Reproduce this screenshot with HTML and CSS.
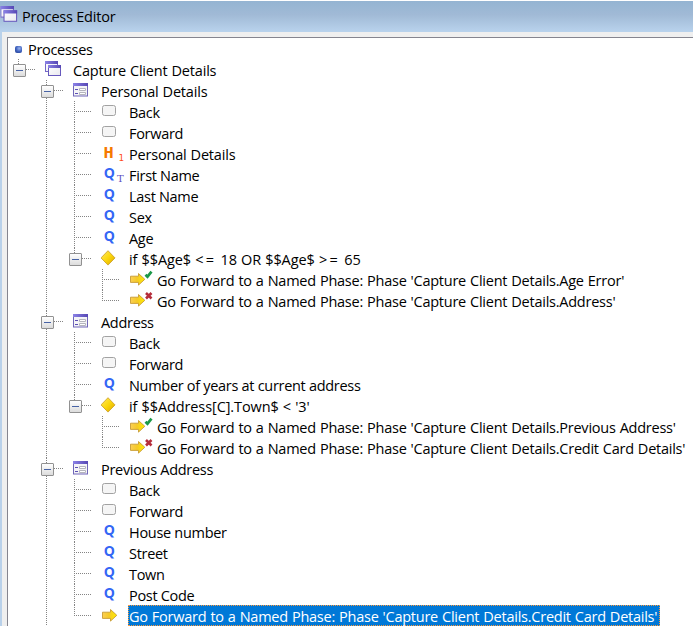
FILE: index.html
```html
<!DOCTYPE html>
<html lang="en">
<head>
<meta charset="utf-8">
<title>Process Editor</title>
<link rel="stylesheet" href="styles.css">
</head>
<body>
<svg class="defs" aria-hidden="true">
  <defs>
    <linearGradient id="bar" x1="0" x2="1"><stop offset="0" stop-color="#8b82e6"/><stop offset="1" stop-color="#5647b4"/></linearGradient>
    <linearGradient id="paper" x1="0" y1="0" x2="1" y2="1"><stop offset="0" stop-color="#fff"/><stop offset="1" stop-color="#e9e9ef"/></linearGradient>
    <linearGradient id="gold" x1="0" y1="0" x2="1" y2="1"><stop offset="0" stop-color="#ffe96a"/><stop offset=".5" stop-color="#fbd70c"/><stop offset="1" stop-color="#dba600"/></linearGradient>
    <linearGradient id="arrowfill" x1="0" x2="1"><stop offset="0" stop-color="#fbcf55"/><stop offset=".45" stop-color="#f5c927"/><stop offset="1" stop-color="#ffee00"/></linearGradient>
    <symbol id="process" viewBox="0 0 27 21">
      <rect x=".5" y="2.5" width="12" height="10" fill="url(#paper)" stroke="#7468c8"/><path d="M0 2h13v3H0z" fill="url(#bar)"/>
      <rect x="3.5" y="6.5" width="12" height="10" fill="url(#paper)" stroke="#6759bd"/><path d="M3 6h13v3H3z" fill="url(#bar)"/>
    </symbol>
    <symbol id="phase" viewBox="0 0 27 21">
      <rect x=".5" y="3.5" width="14" height="12.5" fill="#f4f4f7" stroke="#7066b8"/><path d="M0 3h15v3H0z" fill="url(#bar)"/>
      <path d="M2 9.5h3M2 13.5h3" stroke="#5c50b4"/><path d="M6.5 8.5h6v2h-6zM6.5 12.5h6v2h-6z" fill="#fff" stroke="#b5b5bd"/>
    </symbol>
    <symbol id="button" viewBox="0 0 27 21">
      <rect x="1.5" y="4.5" width="13" height="10" rx="2" fill="#f5f5f5" stroke="#a2a2a2"/>
    </symbol>
    <symbol id="decision" viewBox="0 0 27 21"><path d="M7 2.7l7 7.2-7 7.2-7-7.200z" fill="url(#gold)" stroke="#c99b20" stroke-width=".8"/></symbol>
    <symbol id="arrow" viewBox="0 0 27 21"><path d="M1.500 7.200h8V4.500l6.300 5.800-6.300 5.800v-2.700h-8z" fill="url(#arrowfill)" stroke="#c79b34" stroke-width=".9"/></symbol>
    <symbol id="yes" viewBox="0 0 27 21"><use href="#arrow"/><path d="M16.500 5.700l2 2 4-5" fill="none" stroke="#1b9848" stroke-width="2.700"/></symbol>
    <symbol id="no" viewBox="0 0 27 21"><use href="#arrow"/><path d="M17 3l5.500 5.500M22.500 3L17 8.500" fill="none" stroke="#b52d3b" stroke-width="2.600"/></symbol>
    <symbol id="question" viewBox="0 0 27 21"><text class="glyph-q" x="2.700" y="14">Q</text></symbol>
    <symbol id="textq" viewBox="0 0 27 21"><use href="#question"/><text class="glyph-t" x="16" y="18">T</text></symbol>
    <symbol id="heading" viewBox="0 0 27 21"><text class="glyph-h" x="2.400" y="15">H</text><text class="glyph-one" x="17.500" y="18">1</text></symbol>
  </defs>
</svg>
<div class="window">
  <header class="titlebar">
    <svg class="title-icon" viewBox="0 0 27 21"><use href="#process"/></svg>
    <h1>Process Editor</h1>
  </header>
  <main class="pane">
    <div class="root"><i class="bullet"></i><span class="label">Processes</span></div>
    <ul class="tree">
      <li class="last"><div class="row"><i class="branch open"></i><svg class="icon"><use href="#process"/></svg><span class="label title">Capture Client Details</span></div>
        <ul>
          <li><div class="row"><i class="branch open"></i><svg class="icon"><use href="#phase"/></svg><span class="label title">Personal Details</span></div>
            <ul>
              <li><div class="row"><i class="branch"></i><svg class="icon"><use href="#button"/></svg><span class="label">Back</span></div></li>
              <li><div class="row"><i class="branch"></i><svg class="icon"><use href="#button"/></svg><span class="label">Forward</span></div></li>
              <li><div class="row"><i class="branch"></i><svg class="icon"><use href="#heading"/></svg><span class="label title">Personal Details</span></div></li>
              <li><div class="row"><i class="branch"></i><svg class="icon"><use href="#textq"/></svg><span class="label">First Name</span></div></li>
              <li><div class="row"><i class="branch"></i><svg class="icon"><use href="#question"/></svg><span class="label">Last Name</span></div></li>
              <li><div class="row"><i class="branch"></i><svg class="icon"><use href="#question"/></svg><span class="label">Sex</span></div></li>
              <li><div class="row"><i class="branch"></i><svg class="icon"><use href="#question"/></svg><span class="label">Age</span></div></li>
              <li class="last"><div class="row"><i class="branch open"></i><svg class="icon"><use href="#decision"/></svg><span class="label condition">if $$Age$ <span class="op">&lt;=</span> 18 OR $$Age$ <span class="op">&gt;=</span> 65</span></div>
                <ul>
                  <li><div class="row"><i class="branch"></i><svg class="icon"><use href="#yes"/></svg><span class="label action">Go Forward to a Named Phase: Phase 'Capture Client Details.Age Error'</span></div></li>
                  <li class="last"><div class="row"><i class="branch"></i><svg class="icon"><use href="#no"/></svg><span class="label action">Go Forward to a Named Phase: Phase 'Capture Client Details.Address'</span></div></li>
                </ul>
              </li>
            </ul>
          </li>
          <li><div class="row"><i class="branch open"></i><svg class="icon"><use href="#phase"/></svg><span class="label">Address</span></div>
            <ul>
              <li><div class="row"><i class="branch"></i><svg class="icon"><use href="#button"/></svg><span class="label">Back</span></div></li>
              <li><div class="row"><i class="branch"></i><svg class="icon"><use href="#button"/></svg><span class="label">Forward</span></div></li>
              <li><div class="row"><i class="branch"></i><svg class="icon"><use href="#question"/></svg><span class="label">Number of years at current address</span></div></li>
              <li class="last"><div class="row"><i class="branch open"></i><svg class="icon"><use href="#decision"/></svg><span class="label condition">if $$Address[C].Town$ &lt; '3'</span></div>
                <ul>
                  <li><div class="row"><i class="branch"></i><svg class="icon"><use href="#yes"/></svg><span class="label action">Go Forward to a Named Phase: Phase 'Capture Client Details.Previous Address'</span></div></li>
                  <li class="last"><div class="row"><i class="branch"></i><svg class="icon"><use href="#no"/></svg><span class="label action">Go Forward to a Named Phase: Phase 'Capture Client Details.Credit Card Details'</span></div></li>
                </ul>
              </li>
            </ul>
          </li>
          <li><div class="row"><i class="branch open"></i><svg class="icon"><use href="#phase"/></svg><span class="label">Previous Address</span></div>
            <ul>
              <li><div class="row"><i class="branch"></i><svg class="icon"><use href="#button"/></svg><span class="label">Back</span></div></li>
              <li><div class="row"><i class="branch"></i><svg class="icon"><use href="#button"/></svg><span class="label">Forward</span></div></li>
              <li><div class="row"><i class="branch"></i><svg class="icon"><use href="#question"/></svg><span class="label">House number</span></div></li>
              <li><div class="row"><i class="branch"></i><svg class="icon"><use href="#question"/></svg><span class="label">Street</span></div></li>
              <li><div class="row"><i class="branch"></i><svg class="icon"><use href="#question"/></svg><span class="label">Town</span></div></li>
              <li><div class="row"><i class="branch"></i><svg class="icon"><use href="#question"/></svg><span class="label">Post Code</span></div></li>
              <li class="last"><div class="row"><i class="branch"></i><svg class="icon"><use href="#arrow"/></svg><span class="label action selected">Go Forward to a Named Phase: Phase 'Capture Client Details.Credit Card Details'</span></div></li>
            </ul>
          </li>
        </ul>
      </li>
    </ul>
  </main>
</div>
</body>
</html>
```
FILE: styles.css
```css
* { box-sizing: border-box; }
body {
  margin: 0;
  height: 626px;
  overflow: hidden;
  background: #fff;
  color: #000;
  font: 14.5px/19px "Open Sans", "Noto Sans", sans-serif;
  letter-spacing: -0.3px;
}
.defs { position: absolute; width: 0; height: 0; }
.window {
  height: 626px;
  padding-top: 1px;
  display: flex;
  flex-direction: column;
}
.titlebar {
  flex: none;
  height: 31px;
  display: flex;
  align-items: center;
  background: linear-gradient(#94b4d2, #a1bad6 45%, #b9d3ed);
}
.title-icon { width: 29px; height: 22px; margin: -3px -7px 0 0; }
h1 { margin: 0; font: inherit; letter-spacing: -0.22px; }
.pane {
  flex: 1;
  min-height: 0;
  border-left: 2px solid #b9d1ea;
  background: #fff;
  box-shadow: inset 5px 5px #efefef, inset 6px 6px #85858f;
  padding: 6px 0 0 7px;
}
.root { display: flex; height: 21px; align-items: center; }
.root .label { letter-spacing: -0.3px; }
.bullet {
  width: 7px;
  height: 7px;
  margin: 1px 5px 0 6px;
  border-radius: 2px;
  background: radial-gradient(circle at 60% 35%, #9bb5ef, #3f62be 50%, #263f91);
}
ul { list-style: none; margin: 0; padding: 0; }
ul ul { padding-left: 28px; }
li { position: relative; }
li::before {
  content: "";
  position: absolute;
  left: 9px;
  top: 0;
  bottom: 0;
  width: 1px;
  background: repeating-linear-gradient(#848484 0 1px, transparent 1px 2px);
}
.last::before { bottom: auto; height: 11px; }
.row { display: flex; height: 21px; position: relative; }
.branch {
  flex: none;
  width: 17px;
  height: 1px;
  margin: 10px 10px 0 9px;
  background: repeating-linear-gradient(90deg, #848484 0 1px, transparent 1px 2px);
}
.branch.open::before {
  content: "";
  display: block;
  width: 11px;
  height: 11px;
  margin: -5px 0 0 -5px;
  border: 1px solid #919191;
  border-radius: 1px;
  background:
    linear-gradient(#4863a5, #4863a5) center / 7px 1px no-repeat,
    linear-gradient(#fff, #dcdcdc);
}
.icon { flex: none; width: 27px; height: 21px; }
.label {
  height: 21px;
  border: 1px solid transparent;
  white-space: nowrap;
  line-height: 21px;
}
.title { letter-spacing: -0.19px; word-spacing: 0.5px; }
.action { letter-spacing: -0.24px; word-spacing: 0.5px; }
.condition { letter-spacing: -0.1px; word-spacing: 0.5px; }
.op { letter-spacing: 2.3px; }
.selected {
  background: #0078d7;
  color: #fff;
  border: 1px dotted #ff9a3c;
  padding-right: 2px;
}
.glyph-q, .glyph-h { font: bold 14px "Open Sans", sans-serif; letter-spacing: 0; }
.glyph-q { fill: #3366f5; }
.glyph-h { font-family: "Liberation Mono", monospace; font-size: 17px; fill: #f57900; }
.glyph-t, .glyph-one { font: 10px "DejaVu Serif", serif; letter-spacing: 0; }
.glyph-t { fill: #5c50c0; }
.glyph-one { font: 9px "DejaVu Sans Mono", monospace; fill: #ff4a20; }
```
